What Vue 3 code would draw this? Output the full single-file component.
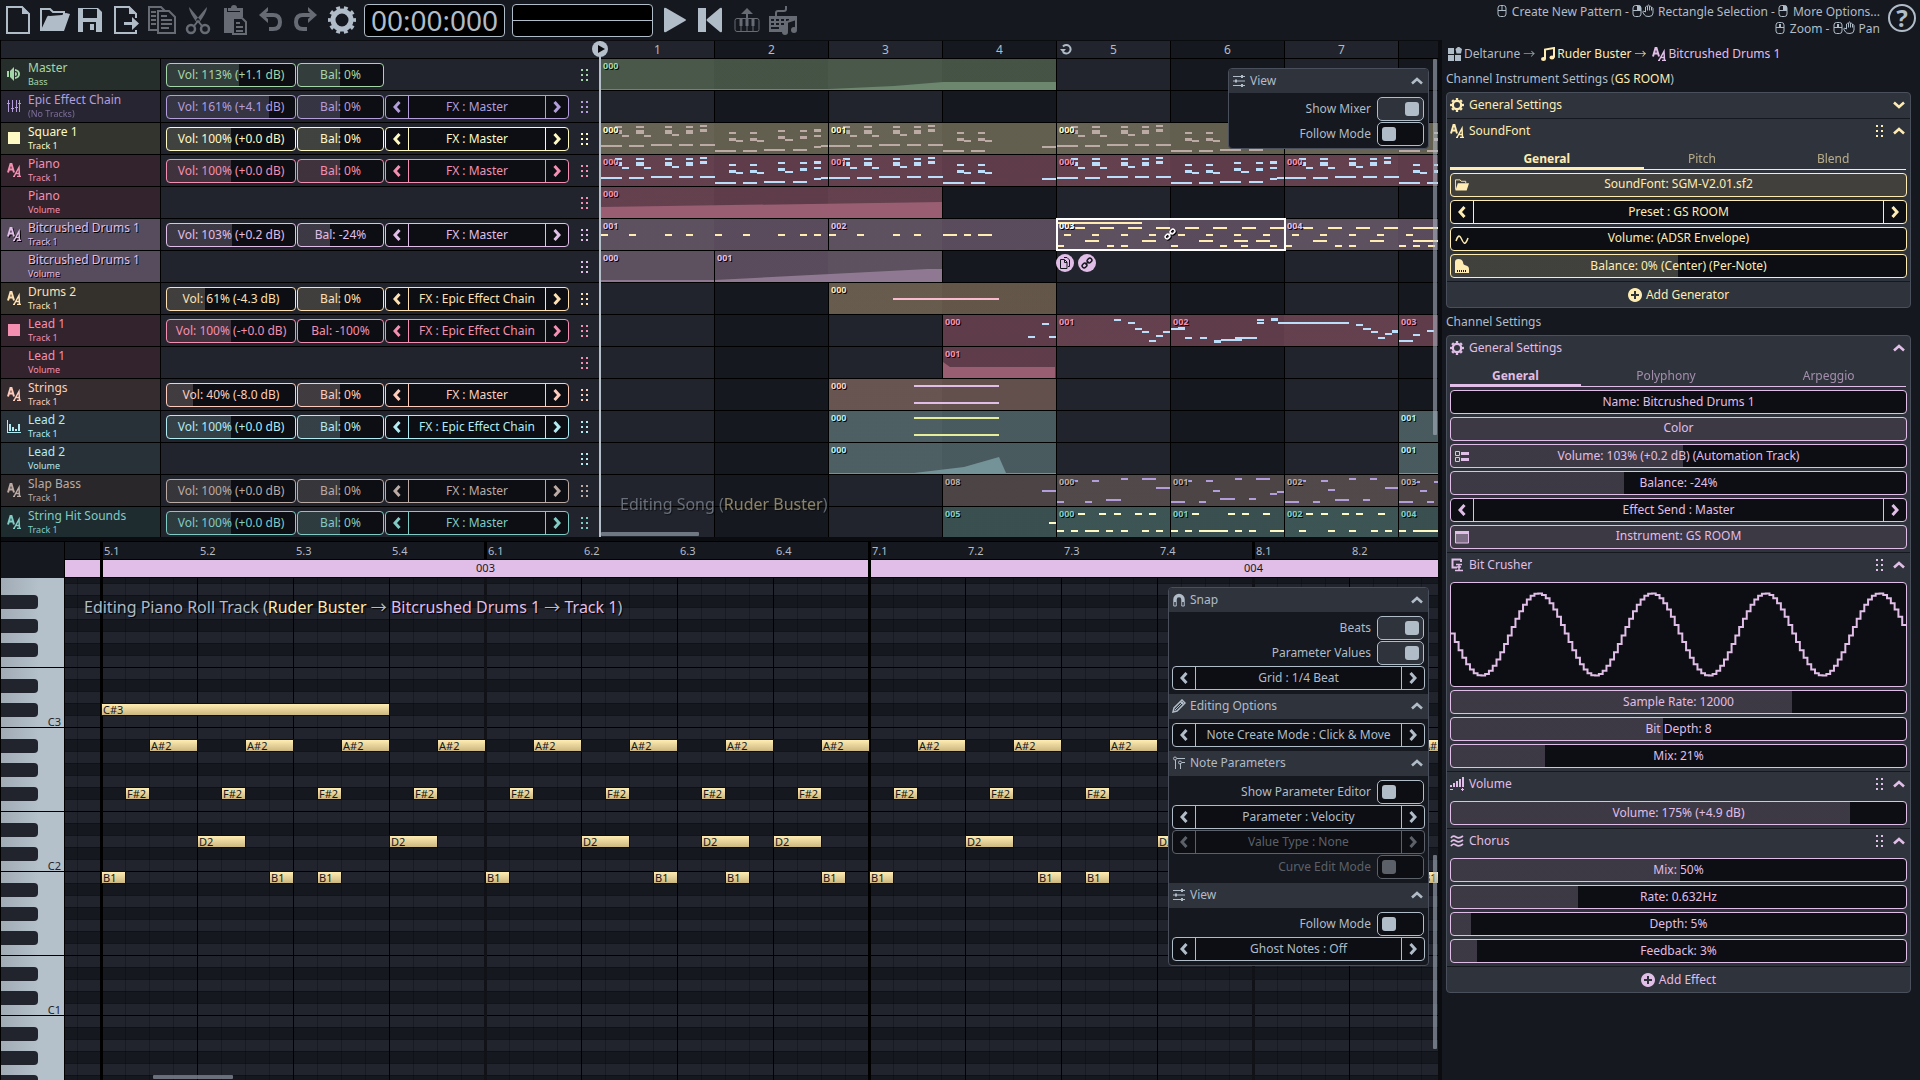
<script setup>
import { ref } from 'vue'

const AMBER = '#ffecb3'
const PINK = '#f48fb1'
const ORCHID = '#e1bee7'

const tools = [
  { id: 'new', label: 'New' },
  { id: 'open', label: 'Open' },
  { id: 'save', label: 'Save' },
  { id: 'export', label: 'Export' },
  { id: 'copy', label: 'Copy', dim: true },
  { id: 'cut', label: 'Cut', dim: true },
  { id: 'paste', label: 'Paste', dim: true },
  { id: 'undo', label: 'Undo', dim: true },
  { id: 'redo', label: 'Redo', dim: true },
  { id: 'gear', label: 'Settings' },
]
const transport = [
  { id: 'play', label: 'Play' },
  { id: 'rewind', label: 'Rewind' },
  { id: 'midi', label: 'MIDI input', dim: true },
  { id: 'keyboard', label: 'Typing keyboard', dim: true },
]

// Notes are [x, y, width, height] inside a pattern; width 7 is one sixteenth.
const n = (y, xs, w = 7, h = 2) => xs.map((x) => [x, y, w, h])
const riffBar = [
  ...n(3, [14, 64, 85]), ...n(3, [35], 8), ...n(7, [14, 64, 85], 7, 4), ...n(7, [35], 8, 4),
  ...n(2, [99]), ...n(6, [99], 7, 3), ...n(12, [21, 43]), ...n(11, [71]),
  ...n(22, [0], 21), ...n(22, [28], 15), ...n(21, [50], 21), ...n(21, [78], 14), ...n(21, [99], 15),
  ...n(27, [114], 21), ...n(27, [142], 14),
  ...n(9, [128, 149]), ...n(15, [128, 149], 7, 3), ...n(17, [135, 156]),
]
const riffA = [
  ...riffBar, ...n(26, [163], 21), ...n(26, [192], 14), ...n(23, [213]), ...n(22, [220]),
  ...n(7, [177, 199]), ...n(13, [177, 199], 7, 3), ...n(16, [184], 8), ...n(6, [213], 7, 3), ...n(12, [213]),
]
const riffB = [...riffBar, ...n(23, [213], 14)]
const riff = [
  { name: '000', at: 0, bars: 2, notes: riffA },
  { name: '001', at: 2, bars: 2, notes: riffB },
  { name: '000', at: 4, bars: 2, notes: riffA },
  { name: '000', at: 6, bars: 2, notes: riffA },
]

const rows = [
  { name: 'Master', sub: 'Bass', color: '#a5d6a7', icon: 'speaker', vol: 'Vol: 113% (+1.1 dB)', v: 56, bal: 'Bal: 0%', b: 50,
    patterns: [{ name: '000', at: 0, bars: 4, area: '0,30 228,30 293,27 342,23 455,23 455,31 0,31' }] },
  { name: 'Epic Effect Chain', sub: '(No Tracks)', faint: true, color: '#b39ddb', icon: 'mixer', vol: 'Vol: 161% (+4.1 dB)', v: 80, bal: 'Bal: 0%', b: 50, fx: 'Master', patterns: [] },
  { name: 'Square 1', sub: 'Track 1', color: '#fff9c4', icon: 'square', vol: 'Vol: 100% (+0.0 dB)', v: 50, bal: 'Bal: 0%', b: 50, fx: 'Master', note: '#bcaaa4', patterns: riff },
  { name: 'Piano', sub: 'Track 1', color: PINK, icon: 'font', vol: 'Vol: 100% (+0.0 dB)', v: 50, bal: 'Bal: 0%', b: 50, fx: 'Master', note: '#bbdefb', patterns: riff },
  { name: 'Piano', sub: 'Volume', color: PINK, patterns: [{ name: '000', at: 0, bars: 3, area: '0,20 341,15 341,31 0,31' }] },
  { name: 'Bitcrushed Drums 1', sub: 'Track 1', color: ORCHID, icon: 'font', active: true, vol: 'Vol: 103% (+0.2 dB)', v: 51, bal: 'Bal: -24%', b: 38, fx: 'Master', note: AMBER,
    patterns: [
      { name: '001', at: 0, bars: 2, notes: n(15, [0, 28, 64, 85, 114, 142, 177, 199, 213]) },
      { name: '002', at: 2, bars: 2, notes: [...n(15, [0, 28, 64, 85, 135]), ...n(15, [114, 149], 14)] },
      { name: '003', at: 4, bars: 2, selected: true, notes: [
        ...n(3, [0], 85), ...n(8, [14, 43, 71, 99, 128, 156, 185, 213], 14),
        ...n(15, [7, 35, 64, 92, 121, 149, 177, 206]), ...n(21, [28, 85, 142, 177, 199], 14),
        ...n(26, [0, 50, 64, 114, 163, 184, 213])] },
      { name: '004', at: 6, bars: 2, notes: [
        ...n(8, [14, 43, 71, 99], 14), ...n(8, [128], 28), ...n(15, [7, 35, 64, 92, 121]),
        ...n(21, [28, 85], 14), ...n(21, [128], 28), ...n(26, [0, 50, 64, 114, 128, 143])] },
    ] },
  { name: 'Bitcrushed Drums 1', sub: 'Volume', color: ORCHID, active: true,
    patterns: [
      { name: '000', at: 0, bars: 1, area: '0,29 113,29 113,31 0,31' },
      { name: '001', at: 1, bars: 2, area: '0,29 213,18 227,18 227,31 0,31' },
    ] },
  { name: 'Drums 2', sub: 'Track 1', color: '#ffe0b2', icon: 'font', vol: 'Vol: 61% (-4.3 dB)', v: 30, bal: 'Bal: 0%', b: 50, fx: 'Epic Effect Chain', note: '#f8bbd0',
    patterns: [{ name: '000', at: 2, bars: 2, notes: n(15, [64], 106) }] },
  { name: 'Lead 1', sub: 'Track 1', color: PINK, icon: 'square', vol: 'Vol: 100% (-+0.0 dB)', v: 50, bal: 'Bal: -100%', b: 0, fx: 'Epic Effect Chain', note: '#bbdefb',
    patterns: [
      { name: '000', at: 3, bars: 1, notes: [...n(21, [85, 106]), ...n(8, [99])] },
      { name: '001', at: 4, bars: 1, notes: [...n(4, [57]), ...n(7, [71]), ...n(13, [78]), ...n(16, [85, 106]), ...n(25, [92]), ...n(20, [99])] },
      { name: '002', at: 5, bars: 2, notes: [
        ...n(13, [0], 14), ...n(12, [7]), ...n(22, [14, 29, 207]), ...n(25, [43], 7, 3), ...n(24, [50], 21), ...n(22, [64], 22),
        ...n(4, [86]), ...n(7, [86]), ...n(3, [100], 7, 3), ...n(7, [107], 71), ...n(9, [185]), ...n(13, [192], 8),
        ...n(16, [200]), ...n(18, [214]), ...n(15, [221], 7, 3)] },
      { name: '003', at: 7, bars: 1, notes: [...n(25, [0], 14), ...n(19, [14]), ...n(15, [28])] },
    ] },
  { name: 'Lead 1', sub: 'Volume', color: PINK, patterns: [{ name: '001', at: 3, bars: 1, area: '0,15 7,20 112,20 112,31 0,31' }] },
  { name: 'Strings', sub: 'Track 1', color: '#ffccbc', icon: 'font', vol: 'Vol: 40% (-8.0 dB)', v: 20, bal: 'Bal: 0%', b: 50, fx: 'Master', note: ORCHID,
    patterns: [{ name: '000', at: 2, bars: 2, notes: [...n(6, [85], 85), ...n(23, [85], 85)] }] },
  { name: 'Lead 2', sub: 'Track 1', color: '#b2ebf2', icon: 'bars', vol: 'Vol: 100% (+0.0 dB)', v: 50, bal: 'Bal: 0%', b: 50, fx: 'Epic Effect Chain', note: '#e6ee9c',
    patterns: [{ name: '000', at: 2, bars: 2, notes: [...n(6, [85], 85), ...n(23, [85], 85)] }, { name: '001', at: 7, bars: 1 }] },
  { name: 'Lead 2', sub: 'Volume', color: '#b2ebf2',
    patterns: [
      { name: '000', at: 2, bars: 2, area: '0,30 85,30 135,24 170,14 177,30 227,30 227,31 0,31' },
      { name: '001', at: 7, bars: 1, area: '0,30 113,30 113,31 0,31' },
    ] },
  { name: 'Slap Bass', sub: 'Track 1', color: '#bcaaa4', icon: 'font', vol: 'Vol: 100% (+0.0 dB)', v: 50, bal: 'Bal: 0%', b: 50, fx: 'Master', note: '#b39ddb',
    patterns: [
      { name: '008', at: 3, bars: 1, notes: n(15, [99], 14) },
      { name: '000', at: 4, bars: 1, notes: [...n(5, [14, 35]), ...n(3, [64]), ...n(3, [85], 14), ...n(12, [99], 14), ...n(26, [0, 28]), ...n(24, [49], 15)] },
      { name: '001', at: 5, bars: 1, notes: [...n(5, [14, 35]), ...n(3, [64]), ...n(3, [85], 14), ...n(15, [42]), ...n(23, [49], 15), ...n(23, [78]), ...n(18, [99]), ...n(16, [106]), ...n(26, [0], 14), ...n(26, [28])] },
      { name: '002', at: 6, bars: 1, notes: [...n(5, [14, 36]), ...n(3, [64, 85]), ...n(14, [43]), ...n(24, [50], 14), ...n(24, [78]), ...n(12, [100], 13), ...n(26, [0], 14), ...n(26, [28])] },
      { name: '003', at: 7, bars: 1, notes: [...n(6, [14, 35]), ...n(15, [21]), ...n(26, [0], 14), ...n(26, [28])] },
    ] },
  { name: 'String Hit Sounds', sub: 'Track 1', color: '#80cbc4', icon: 'font', vol: 'Vol: 100% (+0.0 dB)', v: 50, bal: 'Bal: 0%', b: 50, fx: 'Master', note: '#fff9c4',
    patterns: [
      { name: '005', at: 3, bars: 1, notes: n(15, [106]) },
      { name: '000', at: 4, bars: 1, notes: [...n(6, [21, 42, 57, 78, 92]), ...n(23, [0, 14, 49, 64, 85, 99]), ...n(23, [28], 14)] },
      { name: '001', at: 5, bars: 1, notes: [...n(6, [21, 57, 71, 92]), ...n(23, [0, 14, 64, 78]), ...n(23, [28], 29), ...n(23, [99], 14)] },
      { name: '002', at: 6, bars: 1, notes: [...n(6, [21, 36, 57, 71, 93]), ...n(23, [14, 43, 64, 86, 100])] },
      { name: '004', at: 7, bars: 1, notes: [...n(23, [0]), ...n(23, [14], 28)] },
    ] },
]

// The selected pattern's frame covers the grid lines around it.
const box = (p) => ({
  left: p.at * 114 + 1 + 'px',
  width: p.bars * 114 + (p.selected ? 2 : -1) + 'px',
})

// Piano roll: 96 px per beat, 24 px per sixteenth.
const STEP = 24
const ORIGIN = 36
const pitches = { 'C#3': 125, 'A#2': 161, 'F#2': 209, D2: 257, B1: 293 }
const roll = [
  ['C#3', 0, 12],
  ...[2, 6, 10, 14, 18, 22, 26, 30, 34, 38, 42].map((s) => ['A#2', s, 2]),
  ['A#2', 55, 2],
  ...[1, 5, 9, 13, 17, 21, 25, 29, 33, 37, 41].map((s) => ['F#2', s, 1]),
  ...[4, 12, 20, 25, 28, 36, 44].map((s) => ['D2', s, 2]),
  ...[0, 7, 9, 16, 23, 26, 30, 32, 39, 41, 55].map((s) => ['B1', s, 1]),
].map(([key, s, len]) => ({ key, top: pitches[key], left: ORIGIN + s * STEP, width: len * STEP + 1 }))

const scale = ['B', 'A#', 'A', 'G#', 'G', 'F#', 'F', 'E', 'D#', 'D', 'C#', 'C']
const lanes = Array.from({ length: 42 }, (_, i) => ({ note: scale[i % 12], octave: 3 - Math.floor(i / 12) }))
const beats = Array.from({ length: 14 }, (_, i) => `${5 + Math.floor(i / 4)}.${(i % 4) + 1}`)

const mixerOn = ref(true)
const songFollow = ref(false)
const rollGroups = [
  { title: 'Snap', icon: 'magnet', items: [
    { kind: 'toggle', text: 'Beats', on: true },
    { kind: 'toggle', text: 'Parameter Values', on: true },
    { kind: 'pick', text: 'Grid : 1/4 Beat' }] },
  { title: 'Editing Options', icon: 'pencil', items: [{ kind: 'pick', text: 'Note Create Mode : Click & Move' }] },
  { title: 'Note Parameters', icon: 'params', items: [
    { kind: 'toggle', text: 'Show Parameter Editor', on: false },
    { kind: 'pick', text: 'Parameter : Velocity' },
    { kind: 'pick', text: 'Value Type : None', off: true },
    { kind: 'toggle', text: 'Curve Edit Mode', on: false, off: true }] },
  { title: 'View', icon: 'view', items: [
    { kind: 'toggle', text: 'Follow Mode', on: false },
    { kind: 'pick', text: 'Ghost Notes : Off' }] },
]

const panels = [
  { title: 'Channel Instrument Settings (', em: 'GS ROOM', end: ')', color: AMBER, add: 'Add Generator', sections: [
    { title: 'General Settings', icon: 'cog', closed: true },
    { title: 'SoundFont', icon: 'font', grip: true, tabs: [['General', 194], ['Pitch', 117], ['Blend', 146]], items: [
      { kind: 'button', text: 'SoundFont: SGM-V2.01.sf2', icon: 'folder' },
      { kind: 'pick', text: 'Preset : GS ROOM' },
      { kind: 'plain', text: 'Volume: (ADSR Envelope)', icon: 'sine' },
      { kind: 'slider', text: 'Balance: 0% (Center) (Per-Note)', v: 50, icon: 'grand' }] },
  ] },
  { title: 'Channel Settings', em: '', end: '', color: ORCHID, add: 'Add Effect', sections: [
    { title: 'General Settings', icon: 'cog', tabs: [['General', 131], ['Polyphony', 171], ['Arpeggio', 155]], items: [
      { kind: 'text', text: 'Name: Bitcrushed Drums 1' },
      { kind: 'button', text: 'Color' },
      { kind: 'slider', text: 'Volume: 103% (+0.2 dB) (Automation Track)', v: 51, icon: 'track' },
      { kind: 'slider', text: 'Balance: -24%', v: 38 },
      { kind: 'pick', text: 'Effect Send : Master' },
      { kind: 'button', text: 'Instrument: GS ROOM', icon: 'window' }] },
    { title: 'Bit Crusher', icon: 'clamp', grip: true, items: [
      { kind: 'wave', text: 'wave' },
      { kind: 'slider', text: 'Sample Rate: 12000', v: 75 },
      { kind: 'slider', text: 'Bit Depth: 8', v: 46.6 },
      { kind: 'slider', text: 'Mix: 21%', v: 20.7 }] },
    { title: 'Volume', icon: 'level', grip: true, items: [{ kind: 'slider', text: 'Volume: 175% (+4.9 dB)', v: 87.7 }] },
    { title: 'Chorus', icon: 'chorus', grip: true, items: [
      { kind: 'slider', text: 'Mix: 50%', v: 50.3 },
      { kind: 'slider', text: 'Rate: 0.632Hz', v: 28 },
      { kind: 'slider', text: 'Depth: 5%', v: 4.5 },
      { kind: 'slider', text: 'Feedback: 3%', v: 5.8 }] },
  ] },
]

// Sample-and-hold sine drawn as a staircase.
const hold = 3.8
let wavePath = ''
for (let i = 0; i * hold < 456; i++) {
  const y = (52 - 41.5 * Math.cos((2 * Math.PI * (i * hold + 2 - 88)) / 114)).toFixed(1)
  wavePath += (i ? `V${y}` : `M0 ${y}`) + `H${((i + 1) * hold).toFixed(1)}`
}
</script>

<template>
  <svg class="sprites" aria-hidden="true">
    <symbol id="i-new" viewBox="0 0 36 40"><path d="M7 7h15l7 7v19H7z" fill="none" stroke="currentColor" stroke-width="2" /><path d="M22 6v8h8z" fill="currentColor" /></symbol>
    <symbol id="i-open" viewBox="0 0 36 40"><path d="M5 31V9h9l3 3h11v5" fill="none" stroke="currentColor" stroke-width="2" /><path d="M11 17q1-2 3-1l12-1q2-2 4-2l4 1-6 17H4.500z" fill="currentColor" /></symbol>
    <symbol id="i-save" viewBox="0 0 36 40"><path fill-rule="evenodd" d="M6 8h20l4 4v20H6zM11 9v9h14V9zm0 13v10h13V22zm7 2h4v6h-4z" fill="currentColor" /></symbol>
    <symbol id="i-export" viewBox="0 0 36 40"><path d="M28 18v-4l-7-7H7v26h21v-3" fill="none" stroke="currentColor" stroke-width="2" /><path d="M21 6v8h8zM16 22h8v-5l7 6.500-7 6.500v-5h-8z" fill="currentColor" /></symbol>
    <symbol id="i-copy" viewBox="0 0 36 40"><path d="M13 30H5V7h12l4 4" fill="none" stroke="currentColor" stroke-width="2" /><path d="M14 11h11l6 6v16H14z" fill="#15181f" stroke="currentColor" stroke-width="2" /><path d="M7 12h5M7 16h5M7 20h5M7 24h5M17 16h6M17 20h11M17 24h11M17 28h8" stroke="currentColor" stroke-width="2" /></symbol>
    <symbol id="i-cut" viewBox="0 0 36 40"><path d="M9 7q0 5 8 16l3-3Q11 9 9 7zM27 7q0 5-8 16l-3-3Q25 9 27 7z" fill="currentColor" /><circle cx="11" cy="29" r="4" fill="none" stroke="currentColor" stroke-width="2.500" /><circle cx="25" cy="29" r="4" fill="none" stroke="currentColor" stroke-width="2.500" /><path d="M14 26l4-5 4 5" fill="none" stroke="currentColor" stroke-width="2" /></symbol>
    <symbol id="i-paste" viewBox="0 0 36 40"><path d="M8 8h3v4h13V8h3v9h-9v16H8z" fill="currentColor" /><path d="M12 8h3a3 3 0 0 1 6 0h3v3H12z" fill="currentColor" /><path d="M17 18h9l4 4v12H17z" fill="#15181f" stroke="currentColor" stroke-width="2" /><path d="M20 23h4M20 27h7M20 31h7" stroke="currentColor" stroke-width="2" /></symbol>
    <symbol id="i-undo" viewBox="0 0 36 40"><path d="M10 15h11q7 0 7 7t-7 7h-4" fill="none" stroke="currentColor" stroke-width="4" /><path d="M16 7v4l-4 4 4 4v4l-9-8z" fill="currentColor" /></symbol>
    <symbol id="i-redo" viewBox="0 0 36 40"><path d="M26 15H15q-7 0-7 7t7 7h4" fill="none" stroke="currentColor" stroke-width="4" /><path d="M20 7v4l4 4-4 4v4l9-8z" fill="currentColor" /></symbol>
    <symbol id="i-gear" viewBox="0 0 36 40"><g fill="none" stroke="currentColor"><circle cx="18" cy="20" r="9" stroke-width="5" /><circle cx="18" cy="20" r="12" stroke-width="4" pathLength="100" stroke-dasharray="5 5" stroke-dashoffset="2.500" /></g></symbol>
    <symbol id="i-play" viewBox="0 0 36 40"><path d="M7 9q0-2 2-1l19 11q2 1 0 2L9 32q-2 1-2-1z" fill="currentColor" /></symbol>
    <symbol id="i-rewind" viewBox="0 0 36 40"><path d="M5 8h8v24H5zM29 9v22q0 2-2 1L14 21q-1-1 0-2L27 8q2-1 2 1z" fill="currentColor" /></symbol>
    <symbol id="i-midi" viewBox="0 0 36 40"><path d="M17 18v-4h-5l6-6 6 6h-5v4z" fill="currentColor" /><rect x="6" y="18.500" width="24" height="13" rx="2" fill="none" stroke="currentColor" stroke-width="1" /><path d="M12 19v7M18 19v7M24 19v7" stroke="currentColor" stroke-width="3" /><path d="M12 26v5M18 26v5M24 26v5" stroke="currentColor" stroke-width="1" /></symbol>
    <symbol id="i-keyboard" viewBox="0 0 36 40"><path d="M11 16v-3q0-2 2-2h6q2 0 2-2V6" fill="none" stroke="currentColor" stroke-width="2" /><path fill-rule="evenodd" d="M4 16h28v3l-9 3v6l-6 4H4zM6 19v2h3v-2zm5 0v2h3v-2zm5 0v2h3v-2zm5 0v2h3v-2zM6 23v2h3v-2zm5 0v2h3v-2zm5 0v2h3v-2zM6 27v2h8v-2z" fill="currentColor" /><path d="M22 31v-9l9-3v10" fill="none" stroke="currentColor" stroke-width="2" /><circle cx="20" cy="32" r="3" fill="currentColor" /><circle cx="29" cy="30" r="3" fill="currentColor" /></symbol>
    <symbol id="i-speaker" viewBox="0 0 14 14"><path d="M0 4h2v6H0zM3 4l4-4v14l-4-4zM8 2q5 1 5 5t-5 5v-2q3 0 3-3T8 4zM8 5q2 0 2 2T8 9z" fill="currentColor" /></symbol>
    <symbol id="i-mixer" viewBox="0 0 14 14"><path d="M1.500 1v12M5.500 1v12M9.500 1v12M12.500 1v12M0 4.500h3M4 9.500h3M8 8.500h3M11 4.500h3" stroke="currentColor" fill="none" /></symbol>
    <symbol id="i-square" viewBox="0 0 14 14"><path d="M1 1h12v12H1z" fill="currentColor" /></symbol>
    <symbol id="i-bars" viewBox="0 0 14 14"><path d="M0 1h1v12h13v1H0zM2 5h2v7H2zM5 8h2v4H5zM8 10h2v2H8zM11 5h2v7h-2z" fill="currentColor" /></symbol>
    <symbol id="i-font" viewBox="0 0 14 14"><g fill="none" stroke="currentColor"><path d="M1 9.500L3.500 1h1L7 9.500M2 6.500h4" stroke-width="2" /><path d="M6 13.500h2M10 13.500h4M7 13.500L12 4.500l.5 9M8.500 10.500h4" stroke-width="1.500" /></g></symbol>
    <symbol id="i-view" viewBox="0 0 14 14"><path d="M1 2.500h12M1 7h12M1 11.500h12" stroke="currentColor" /><path d="M9 1h2v3H9zM3 5.500h2v3H3zM9 10h2v3H9z" fill="currentColor" /></symbol>
    <symbol id="i-magnet" viewBox="0 0 14 14"><path d="M3 9V6.500a4 4 0 0 1 8 0V9" fill="none" stroke="currentColor" stroke-width="3.500" /><path d="M1.750 9v4h2.500V9M9.750 9v4h2.500V9" fill="none" stroke="currentColor" /></symbol>
    <symbol id="i-pencil" viewBox="0 0 14 14"><path d="M1 13l1-4 8-8 3 3-8 8zM8.500 2.500l3 3" fill="none" stroke="currentColor" stroke-width="1.500" /><path d="M3 11L11 3" stroke="currentColor" /></symbol>
    <symbol id="i-params" viewBox="0 0 14 14"><path d="M3.500 4v9M8.500 7v6M5 2.500h8M10 6.500h3" stroke="currentColor" /><circle cx="3" cy="2.500" r="1.500" fill="none" stroke="currentColor" /><circle cx="8" cy="6.500" r="1.500" fill="none" stroke="currentColor" /></symbol>
    <symbol id="i-cog" viewBox="0 0 14 14"><g fill="none" stroke="currentColor"><circle cx="7" cy="7" r="4.200" stroke-width="2.400" /><circle cx="7" cy="7" r="6" stroke-width="2" pathLength="80" stroke-dasharray="5 5" stroke-dashoffset="2.500" /></g></symbol>
    <symbol id="i-folder" viewBox="0 0 15 14"><path d="M.5 12V1.500h5l1 1.500h5v2" fill="none" stroke="currentColor" /><path d="M3 5h12l-2.500 8H.5z" fill="currentColor" /></symbol>
    <symbol id="i-sine" viewBox="0 0 14 14"><path d="M1 9q2.500-8 5-3t3 5q2 1 4-5" fill="none" stroke="currentColor" stroke-width="1.500" /></symbol>
    <symbol id="i-grand" viewBox="0 0 14 14"><path d="M0 10V3q0-3 3.500-3T8 3q0 3 3 3.500T14 10v4H0z" fill="currentColor" /><path d="M2.500 11v2M4.500 11v2M6.500 11v2M8.500 11v2M10.500 11v2" stroke="#15181f" /></symbol>
    <symbol id="i-track" viewBox="0 0 14 14"><path d="M.5 2.500h4v4h-4zM.5 8.500h4v4h-4z" fill="none" stroke="currentColor" /><path d="M6 3h8v3H6zM6 9h8v3H6z" fill="currentColor" /></symbol>
    <symbol id="i-window" viewBox="0 0 14 14"><path d="M.5 3h13v10H.5z" fill="currentColor" fill-opacity=".4" stroke="currentColor" /><path d="M0 1h14v3H0z" fill="currentColor" /></symbol>
    <symbol id="i-clamp" viewBox="0 0 14 14"><path d="M11 1.500H2.500v8H7M11 1v3" fill="none" stroke="currentColor" stroke-width="2" /><path d="M6 6.500h6M9 7v5M7 9h4M5 12.500h8" stroke="currentColor" stroke-width="1.500" /></symbol>
    <symbol id="i-level" viewBox="0 0 14 14"><path d="M0 8h2v2H0zM3 6h2v4H3zM6 4h2v6H6zM9 2h2v8H9zM12 0h2v10h-2zM0 12h3v1H0zM11 12h3v1h-3zM12 11h1v3h-1z" fill="currentColor" /></symbol>
    <symbol id="i-chorus" viewBox="0 0 14 14"><path d="M1 4q2-3 5-1t7-1M1 8q2-3 5-1t7-1M1 12q2-3 5-1t7-1" fill="none" stroke="currentColor" stroke-width="1.700" /></symbol>
    <symbol id="i-add" viewBox="0 0 14 14"><path fill-rule="evenodd" d="M7 0a7 7 0 1 0 .01 0zM6 3h2v3h3v2H8v3H6V8H3V6h3z" fill="currentColor" /></symbol>
    <symbol id="i-grip" viewBox="0 0 8 12"><path d="M0 0h2v2H0zM5 0h2v2H5zM0 5h2v2H0zM5 5h2v2H5zM0 10h2v2H0zM5 10h2v2H5z" fill="currentColor" /></symbol>
    <symbol id="i-left" viewBox="0 0 8 12"><path d="M6.500 1L2 6l4.500 5" fill="none" stroke="currentColor" stroke-width="3" /></symbol>
    <symbol id="i-right" viewBox="0 0 8 12"><path d="M1.500 1L6 6l-4.500 5" fill="none" stroke="currentColor" stroke-width="3" /></symbol>
    <symbol id="i-up" viewBox="0 0 12 8"><path d="M1 6.500L6 2l5 4.500" fill="none" stroke="currentColor" stroke-width="2.600" /></symbol>
    <symbol id="i-down" viewBox="0 0 12 8"><path d="M1 1.500L6 6l5-4.500" fill="none" stroke="currentColor" stroke-width="2.600" /></symbol>
    <symbol id="i-mouse" viewBox="0 0 10 14"><rect x="1" y="1.500" width="8" height="11" rx="2.500" fill="none" stroke="currentColor" /><path d="M1 6.500h8M5 2v4.500" stroke="currentColor" /></symbol>
    <symbol id="i-mouse-r" viewBox="0 0 10 14"><rect x="1" y="1.500" width="8" height="11" rx="2.500" fill="none" stroke="currentColor" /><path d="M1 6.500h8" stroke="currentColor" /><path d="M5 1.500h3L9 3v3.500H5z" fill="currentColor" /></symbol>
    <symbol id="i-mouse-m" viewBox="0 0 10 14"><rect x="1" y="1.500" width="8" height="11" rx="2.500" fill="none" stroke="currentColor" /><path d="M1 6.500h8" stroke="currentColor" /><path d="M4 3h2v4H4z" fill="currentColor" /></symbol>
    <symbol id="i-hand" viewBox="0 0 12 14"><path d="M3.500 8V3q1-1.500 2 0 0-2 1-2t1 2q1-1.500 2 0v1q1-1 1.500.5V9q0 3.500-4 3.500T2.500 11L.7 8Q1 6 3.500 8M5.500 3v3.500M7.500 3v3.500M9.500 4v2.500" fill="none" stroke="currentColor" /></symbol>
    <symbol id="i-blocks" viewBox="0 0 14 14"><path d="M0 1h6v6H0zM0 8h6v6H0zM7 8h6v6H7zM10.500-.5L14 2l-1 4.500H8.500L7.500 2z" fill="currentColor" /></symbol>
    <symbol id="i-music" viewBox="0 0 14 14"><path d="M4 12V2.500L13 1v9.500" fill="none" stroke="currentColor" stroke-width="2" /><ellipse cx="2.500" cy="12" rx="2.500" ry="2" fill="currentColor" /><ellipse cx="11" cy="10.500" rx="2.500" ry="2" fill="currentColor" /></symbol>
    <symbol id="i-link" viewBox="0 0 12 12"><g fill="none" stroke="currentColor" stroke-width="1.500"><rect x="1" y="6.500" width="5" height="4" rx="2" transform="rotate(-45 3.500 8.500)" /><rect x="6" y="1.500" width="5" height="4" rx="2" transform="rotate(-45 8.500 3.500)" /><path d="M4.500 7.500l3-3" /></g></symbol>
    <symbol id="i-pages" viewBox="0 0 12 12"><path d="M1.500 2.500h4L8 5v6.500H1.500zM5 .5h3L10.500 3v6.500H9M5.500 3v2.500H8" fill="none" stroke="currentColor" /></symbol>
    <symbol id="i-loop" viewBox="0 0 12 12"><path d="M3 3.500A4.300 4.300 0 1 1 3 9" fill="none" stroke="currentColor" stroke-width="2" /><path d="M0 6h6L3 9.500z" fill="currentColor" /></symbol>
  </svg>

  <div class="app">
    <header class="toolbar">
      <button v-for="t in tools" :key="t.id" class="tool" :class="{ dim: t.dim }" :aria-label="t.label"><svg><use :href="'#i-' + t.id" /></svg></button>
      <output class="clock">00:00:000</output>
      <div class="scope"></div>
      <button v-for="t in transport" :key="t.id" class="tool" :class="{ dim: t.dim }" :aria-label="t.label"><svg><use :href="'#i-' + t.id" /></svg></button>
      <div class="hints">
        <p><svg class="m"><use href="#i-mouse" /></svg>Create New Pattern - <svg class="m tight"><use href="#i-mouse-r" /></svg><svg class="hand"><use href="#i-hand" /></svg>Rectangle Selection - <svg class="m"><use href="#i-mouse-r" /></svg>More Options...</p>
        <p><svg class="m"><use href="#i-mouse-m" /></svg>Zoom - <svg class="m tight"><use href="#i-mouse-m" /></svg><svg class="hand"><use href="#i-hand" /></svg>Pan</p>
      </div>
      <button class="help">?</button>
    </header>

    <div class="work">
      <main class="editors">
        <section class="song">
          <div class="ruler">
            <div class="ruler-pad"></div>
            <div class="bars"><span v-for="b in 8" :key="b">{{ b === 8 ? '' : b }}</span></div>
          </div>
          <div v-for="(row, i) in rows" :key="i" class="row" :class="{ active: row.active }" :style="{ '--c': row.color }">
            <div class="chan">
              <span class="chan-icon"><svg v-if="row.icon"><use :href="'#i-' + row.icon" /></svg></span>
              <span class="chan-text"><b>{{ row.name }}</b><small :class="{ faint: row.faint }">{{ row.sub }}</small></span>
            </div>
            <div class="mix">
              <template v-if="row.vol">
                <label class="ctl slider vol" :style="{ '--v': row.v + '%' }"><span>{{ row.vol }}</span><input type="range" :value="row.v" /></label>
                <label class="ctl slider bal" :style="{ '--v': row.b + '%' }"><span>{{ row.bal }}</span><input type="range" :value="row.b" /></label>
                <div v-if="row.fx" class="ctl pick fx">
                  <button aria-label="Previous"><svg><use href="#i-left" /></svg></button>
                  <select :aria-label="row.name + ' effect send'"><option>FX : {{ row.fx }}</option></select>
                  <button aria-label="Next"><svg><use href="#i-right" /></svg></button>
                </div>
              </template>
              <svg class="grip"><use href="#i-grip" /></svg>
            </div>
            <div class="lane">
              <div v-for="p in row.patterns" :key="p.at" class="pattern" :class="{ selected: p.selected, even: p.at % 2 }" :style="box(p)">
                <svg class="art" aria-hidden="true">
                  <polygon v-if="p.area" class="area" :points="p.area" />
                  <rect v-for="(r, k) in p.notes" :key="k" :x="r[0]" :y="r[1]" :width="r[2]" :height="r[3]" :fill="row.note" />
                </svg>
                <span class="pname">{{ p.name }}</span>
                <svg v-if="p.selected" class="link"><use href="#i-link" /></svg>
              </div>
            </div>
          </div>
          <div class="playhead"><span></span></div>
          <svg class="loop"><use href="#i-loop" /></svg>
          <div class="badges"><i><svg><use href="#i-pages" /></svg></i><i><svg><use href="#i-link" /></svg></i></div>
          <h2 class="title song-title">Editing Song (<em class="amber">Ruder Buster</em>)</h2>
          <span class="bar-v song-v"></span><span class="bar-h song-h"></span>
          <div class="float song-float">
            <div class="fhead"><svg><use href="#i-view" /></svg><span>View</span><svg class="chev"><use href="#i-up" /></svg></div>
            <div class="fbody">
              <label class="toggle"><span>Show Mixer</span><input v-model="mixerOn" type="checkbox" /></label>
              <label class="toggle"><span>Follow Mode</span><input v-model="songFollow" type="checkbox" /></label>
            </div>
          </div>
        </section>

        <section class="roll">
          <div class="rhead">
            <div class="corner"></div>
            <div class="rtop">
              <div class="beats"><span v-for="b in beats" :key="b" :class="{ bar: b.endsWith('.1') }">{{ b }}</span></div>
              <div class="strip"><span class="lead"></span><span>003</span><span>004</span></div>
            </div>
          </div>
          <div class="rbody">
            <div class="keys">
              <div v-for="(l, i) in lanes" :key="i" class="key" :class="{ black: l.note.length > 1, edge: i && (l.note === 'B' || l.note === 'E') }"><span v-if="l.note === 'C'">C{{ l.octave }}</span></div>
            </div>
            <div class="grid">
              <div v-for="(l, i) in lanes" :key="i" class="glane" :class="{ black: l.note.length > 1, edge: i && (l.note === 'B' || l.note === 'E') }"></div>
              <div class="lines"></div>
              <div class="barlines"></div>
              <div v-for="(k, i) in roll" :key="i" class="note" :style="{ left: k.left + 'px', top: k.top + 'px', width: k.width + 'px' }">{{ k.key }}</div>
              <h2 class="title roll-title">Editing Piano Roll Track (<em class="amber">Ruder Buster</em> <span class="arrow">→</span> <em class="orchid">Bitcrushed Drums 1</em> <span class="arrow">→</span> <em class="orchid">Track 1</em>)</h2>
              <span class="bar-v roll-v"></span><span class="bar-h roll-h"></span>
            </div>
          </div>
          <div class="float roll-float">
            <template v-for="g in rollGroups" :key="g.title">
              <div class="fhead"><svg><use :href="'#i-' + g.icon" /></svg><span>{{ g.title }}</span><svg class="chev"><use href="#i-up" /></svg></div>
              <div class="fbody">
                <template v-for="it in g.items" :key="it.text">
                  <label v-if="it.kind === 'toggle'" class="toggle" :class="{ off: it.off }"><span>{{ it.text }}</span><input type="checkbox" :checked="it.on" :disabled="it.off" /></label>
                  <div v-else class="ctl pick" :class="{ off: it.off }">
                    <button aria-label="Previous"><svg><use href="#i-left" /></svg></button>
                    <select :aria-label="it.text"><option>{{ it.text }}</option></select>
                    <button aria-label="Next"><svg><use href="#i-right" /></svg></button>
                  </div>
                </template>
              </div>
            </template>
          </div>
        </section>
      </main>

      <aside class="side">
        <nav class="crumbs">
          <svg><use href="#i-blocks" /></svg><a href="#deltarune">Deltarune</a><span class="arrow">→</span>
          <span class="amber"><svg><use href="#i-music" /></svg></span><a href="#song" class="amber">Ruder Buster</a><span class="arrow amber">→</span>
          <span class="orchid"><svg><use href="#i-font" /></svg></span><a href="#channel" class="orchid">Bitcrushed Drums 1</a>
        </nav>
        <template v-for="p in panels" :key="p.add">
          <h3 class="ptitle">{{ p.title }}<em class="amber">{{ p.em }}</em>{{ p.end }}</h3>
          <div class="panel" :style="{ '--c': p.color }">
            <section v-for="s in p.sections" :key="s.title" :class="{ closed: s.closed }">
              <div class="shead" :class="{ pad: !s.tabs && !s.closed }">
                <svg class="ic"><use :href="'#i-' + s.icon" /></svg><span>{{ s.title }}</span>
                <svg v-if="s.grip" class="grip"><use href="#i-grip" /></svg>
                <svg class="chev"><use :href="s.closed ? '#i-down' : '#i-up'" /></svg>
              </div>
              <div v-if="s.tabs" class="tabs" role="tablist">
                <button v-for="(t, i) in s.tabs" :key="t[0]" role="tab" :class="{ on: i === 0 }" :style="{ flexGrow: t[1] }">{{ t[0] }}</button>
              </div>
              <div v-if="s.items" class="items">
                <template v-for="it in s.items" :key="it.text">
                  <label v-if="it.kind === 'slider'" class="ctl slider" :style="{ '--v': it.v + '%' }"><svg v-if="it.icon" class="lead-ic"><use :href="'#i-' + it.icon" /></svg><span>{{ it.text }}</span><input type="range" :value="it.v" /></label>
                  <div v-else-if="it.kind === 'pick'" class="ctl pick">
                    <button aria-label="Previous"><svg><use href="#i-left" /></svg></button>
                    <select :aria-label="it.text"><option>{{ it.text }}</option></select>
                    <button aria-label="Next"><svg><use href="#i-right" /></svg></button>
                  </div>
                  <input v-else-if="it.kind === 'text'" class="ctl box" type="text" aria-label="Name" :value="it.text" />
                  <div v-else-if="it.kind === 'wave'" class="ctl wave"><svg viewBox="0 0 456 104" preserveAspectRatio="none"><path :d="wavePath" /></svg></div>
                  <button v-else class="ctl box" :class="{ solid: it.kind === 'button' }"><svg v-if="it.icon" class="lead-ic"><use :href="'#i-' + it.icon" /></svg>{{ it.text }}</button>
                </template>
              </div>
            </section>
            <button class="add"><svg class="ic"><use href="#i-add" /></svg>{{ p.add }}</button>
          </div>
        </template>
      </aside>
    </div>
  </div>
</template>

<style>
html, body { margin: 0; background: #0b0c10; }
</style>

<style scoped>
* { box-sizing: border-box; }
.sprites { position: absolute; width: 0; height: 0; }
.app {
  --c: #b0bcc8;
  --dark: #15181f;
  --cell: #21242d;
  --well: #0c0e13;
  display: flex; flex-direction: column; height: 100vh; overflow: hidden;
  background: #0b0c10; color: var(--c);
  font: 12px/16px "Noto Sans", sans-serif;
}
button, input, select { font: inherit; color: inherit; margin: 0; padding: 0; border: 0; background: none; border-radius: 0; outline: 0; }
h2, h3, p { margin: 0; font-weight: 400; }
em { font-style: normal; }
a { color: inherit; text-decoration: none; }
svg { display: block; flex: none; width: 14px; height: 14px; overflow: visible; }
.amber { color: #ffecb3; }
.orchid { color: #e1bee7; }
.arrow { font-family: "Noto Sans CJK JP", sans-serif; line-height: 1; }

.toolbar { display: flex; align-items: center; height: 40px; flex: none; background: var(--dark); }
.tool { width: 36px; height: 40px; }
.tool svg { width: 36px; height: 40px; }
.dim { color: #666b74; }
.clock, .scope { width: 141px; height: 33px; margin: 1px 3px 0 4px; border: 1px solid var(--c); border-radius: 4px; background: #000; }
.clock { font-size: 28px; line-height: 30px; text-align: center; }
.scope { margin-right: 4px; background: linear-gradient(#000 15px, var(--c) 15px 16px, #000 16px); }
.hints { margin-left: auto; margin-bottom: 1px; line-height: 17px; }
.hints p { display: flex; justify-content: flex-end; align-items: center; white-space: pre; }
.hints .m { width: 10px; margin-right: 5px; }
.hints .tight { margin-right: 0; }
.hints .hand { width: 12px; margin-right: 4px; }
.help { width: 28px; height: 28px; margin: 0 4px 4px 8px; border: 2px solid var(--c); border-radius: 50%; font-size: 24px; font-weight: 700; line-height: 24px; }

.work { display: flex; flex: 1; min-height: 0; }
.editors { flex: 1; min-width: 0; display: flex; flex-direction: column; border-left: 1px solid #000; }

.song { position: relative; overflow: hidden; flex: none; }
.ruler { display: flex; height: 18px; background: var(--cell); border-top: 1px solid #0b0c10; }
.ruler-pad { flex: none; width: 599px; }
.bars { flex: 1; min-width: 0; display: flex; overflow: hidden; }
.bars span { flex: none; width: 114px; line-height: 17px; text-align: center; border-left: 1px solid #000; }
.bars span:first-child { border-color: var(--cell); }
.bars span:nth-child(even) { background: var(--dark); }
.row { display: flex; height: 32px; border-top: 1px solid #000; color: var(--c); }
.row:nth-child(16) { height: 31px; }
.chan { flex: none; display: flex; width: 160px; background: color-mix(in srgb, var(--c) 16%, #0d0e13); border-right: 1px solid #000; }
.chan-icon { width: 27px; padding: 8px 6px; flex: none; }
.chan-text { display: flex; flex-direction: column; white-space: nowrap; }
.chan-text b { font-weight: 400; line-height: 17px; }
.chan-text small { font-size: 9px; line-height: 12px; }
.faint { opacity: .6; }
.active .chan { background: color-mix(in srgb, var(--c) 35%, #0d0e13); text-shadow: 1px 1px 0 #000; }
.active .chan svg { filter: drop-shadow(1px 1px 0 #000); }
.mix { flex: none; display: flex; gap: 1px; width: 439px; padding: 4px 11px 0 5px; background: var(--cell); align-items: flex-start; }
.mix .grip { margin-top: 6px; }
.vol { width: 130px; }
.bal { width: 87px; }
.fx { width: 184px; }
.grip { width: 8px; height: 12px; margin-left: auto; }
.lane { position: relative; flex: 1; min-width: 0; background: repeating-linear-gradient(to right, #000 0 1px, var(--cell) 1px 114px, #000 114px 115px, var(--dark) 115px 228px); }
.pattern {
  --a: color-mix(in srgb, var(--c) 33%, #1d1a1d);
  --b: color-mix(in srgb, var(--c) 33%, #161316);
  position: absolute; top: 0; height: 31px; overflow: hidden;
  background: repeating-linear-gradient(to right, var(--a) 0 113px, var(--b) 113px 227px, var(--a) 227px 228px);
}
.pattern.even { background: repeating-linear-gradient(to right, var(--b) 0 113px, var(--a) 113px 227px, var(--b) 227px 228px); }
.art { width: 100%; height: 31px; }
.area { fill: color-mix(in srgb, var(--c) 58%, #1d1a1d); }
.pname { position: absolute; left: 2px; top: 1px; font-size: 9px; line-height: 12px; font-weight: 700; text-shadow: 1px 1px 0 #000; }
.pattern.selected { z-index: 1; margin: -1px; height: 33px; padding: 1px; color: #fff; }
.pattern.selected::after { content: ""; position: absolute; inset: 0; border: 2px solid #fff; }
.pattern.selected .pname { left: 3px; top: 2px; }
.link { position: absolute; left: 108px; top: 10px; width: 12px; height: 12px; filter: drop-shadow(1px 1px 0 #000); }
.playhead { position: absolute; left: 598px; top: 1px; bottom: 0; width: 2px; background: #b4bfca; }
.playhead span { position: absolute; left: -7px; top: 0; width: 16px; height: 16px; border-radius: 50%; background: #b4bfca; }
.playhead span::after { content: ""; position: absolute; left: 6px; top: 4px; border: 4px solid transparent; border-left: 7px solid #0b0c10; border-right: 0; }
.loop { position: absolute; left: 1059px; top: 3px; width: 12px; height: 12px; }
.badges { position: absolute; left: 1055px; top: 214px; display: flex; gap: 4px; }
.badges i { display: grid; place-items: center; width: 18px; height: 18px; border-radius: 50%; background: #e1bee7; color: #15181f; }
.badges svg { width: 12px; height: 12px; }
.title { position: absolute; font-size: 16px; line-height: 22px; white-space: nowrap; text-shadow: 1px 1px 1px #000; }
.song-title { left: 619px; top: 453px; opacity: .5; }
.roll-title { left: 19px; top: 18px; }
.bar-v, .bar-h { position: absolute; background: rgba(176, 188, 200, .55); border-radius: 1px; }
.bar-v { width: 4px; right: 1px; }
.bar-h { height: 4px; }
.song-v { top: 19px; height: 376px; }
.song-h { left: 600px; bottom: 1px; width: 98px; }
.roll-v { top: 277px; height: 194px; }
.roll-h { left: 88px; bottom: 1px; width: 80px; }

.ctl { position: relative; display: block; height: 24px; border: 1px solid var(--c); border-radius: 4px; background: var(--well); color: var(--c); text-align: center; line-height: 21px; white-space: nowrap; }
.box { padding-bottom: 2px; line-height: 20px; }
.slider, .solid { --fill: color-mix(in srgb, var(--c) 15%, rgb(31, 34, 40)); }
.slider { background: linear-gradient(to right, var(--fill) var(--v), var(--well) 0); }
.solid { background: var(--fill); }
.slider input { position: absolute; inset: 0; width: 100%; height: 100%; opacity: 0; }
.lead-ic { position: absolute; left: 4px; top: 4px; }
.pick { display: flex; }
.pick button { flex: none; width: 23px; display: grid; place-items: center; }
.pick button:first-child { border-right: 1px solid var(--c); }
.pick button:last-child { border-left: 1px solid var(--c); }
.pick button svg { width: 8px; height: 12px; }
.pick select { flex: 1; min-width: 0; appearance: none; text-align: center; text-align-last: center; line-height: 20px; padding-bottom: 1px; }
.off { --c: #5c6169; color: #5c6169; }

.float { position: absolute; right: 9px; z-index: 2; background: var(--dark); border: 1px solid #4a4f5c; border-radius: 4px; overflow: hidden; }
.song-float { top: 28px; width: 201px; }
.roll-float { top: 45px; width: 261px; }
.fhead { display: flex; align-items: center; height: 25px; padding: 0 5px 1px 3px; background: #2f333c; }
.fhead:first-child { height: 24px; }
.fhead span { flex: 1; margin-left: 4px; }
.chev { width: 12px; height: 8px; }
.fbody { display: flex; flex-direction: column; gap: 1px; padding: 4px 3px; }
.song-float .fbody { padding-bottom: 2px; }
.toggle { display: flex; justify-content: flex-end; align-items: center; height: 24px; padding-right: 1px; }
.toggle span { margin-right: 6px; margin-bottom: 1px; }
.toggle input { appearance: none; display: flex; align-items: center; width: 47px; height: 24px; padding: 0 4px; border: 1px solid var(--c); border-radius: 5px; background: var(--well); }
.toggle input::before { content: ""; width: 14px; height: 14px; border-radius: 3px; background: var(--c); }
.toggle input:checked { justify-content: flex-end; background: #2f333c; }

.roll { position: relative; flex: 1; min-height: 0; display: flex; flex-direction: column; margin-top: 4px; border-top: 1px solid #000; overflow: hidden; }
.rhead { display: flex; flex: none; height: 36px; background: var(--dark); }
.corner { flex: none; width: 64px; border-right: 1px solid #000; }
.rtop { flex: 1; min-width: 0; overflow: hidden; }
.beats { display: flex; height: 18px; padding-left: 35px; border-bottom: 1px solid #000; font-size: 11px; line-height: 18px; }
.beats span { flex: none; width: 96px; padding-left: 4px; }
.beats .bar { border-left: 3px solid #000; padding-left: 1px; }
.strip { display: flex; height: 18px; border-bottom: 1px solid #000; font-size: 11px; line-height: 16px; color: #15181f; text-align: center; }
.strip span { flex: none; width: 768px; background: #e1bee7; border-left: 3px solid #000; }
.strip .lead { width: 35px; border: 0; }
.rbody { flex: 1; min-height: 0; display: flex; overflow: hidden; }
.keys { flex: none; width: 64px; padding-top: 5px; border-right: 1px solid #000; background: linear-gradient(to right, #a0abb5, #b4c0ca 60%); }
.key { position: relative; height: 12px; text-align: right; font-size: 11px; line-height: 13px; color: #21242d; }
.key span { padding-right: 3px; }
.key.edge { border-top: 1px solid #000; }
.key.black::before { content: ""; position: absolute; z-index: 1; left: 0; top: 0; width: 37px; height: 14px; border-radius: 0 4px 4px 0; background: var(--cell); }
.grid { position: relative; flex: 1; min-width: 0; padding-top: 5px; background: var(--dark); overflow: hidden; }
.glane { height: 12px; background: var(--cell); border-top: 1px solid #12141a; }
.glane.black { background: var(--dark); border-color: #0f1116; }
.glane.edge { border-color: #000; }
.lines { position: absolute; inset: 0; background: repeating-linear-gradient(to right, #000 0 1px, transparent 1px 96px) 36px 0, repeating-linear-gradient(to right, rgba(0, 0, 0, .25) 0 1px, transparent 1px 24px) 12px 0; background-repeat: no-repeat; }
.barlines { position: absolute; inset: 0 0 0 35px; background: repeating-linear-gradient(to right, #000 0 3px, transparent 3px 768px), repeating-linear-gradient(to right, #101217 0 3px, transparent 3px 384px); }
.note { position: absolute; height: 13px; border: 1px solid #0d0e13; background: linear-gradient(#ffecb3, #cbb77f); color: #15181f; font-size: 11px; line-height: 12px; padding-left: 1px; overflow: hidden; }

.side { flex: none; width: 482px; padding: 2px 9px 0 4px; border-left: 4px solid #0b0c10; background: var(--dark); overflow: hidden; }
.crumbs { display: flex; align-items: center; height: 24px; padding-left: 2px; }
.crumbs a { margin: 0 2px; }
.crumbs .arrow { margin: 0 6px 0 1px; opacity: .8; }
.ptitle { height: 26px; font-size: 12px; line-height: 26px; }
.panel { display: flex; flex-direction: column; margin-bottom: 1px; border: 1px solid #4a4f5c; border-radius: 4px; background: #2f333c; color: var(--c); }
.panel section { border-bottom: 1px solid #15181f; }
.shead { display: flex; align-items: center; height: 25px; padding: 0 5px 2px 3px; }
.shead.pad { margin-bottom: 4px; }
.shead span { flex: 1; margin-left: 5px; }
.shead .chev { margin-left: 9px; }
.tabs { display: flex; height: 26px; margin: 0 4px 3px 3px; border-bottom: 1px solid var(--c); }
.tabs button { flex-basis: 0; height: 26px; padding-top: 6px; border-bottom: 3px solid transparent; opacity: .65; }
.tabs .on { font-weight: 700; border-color: var(--c); opacity: 1; }
.items { display: flex; flex-direction: column; gap: 3px; padding: 0 3px 3px; }
.wave { height: 105px; }
.wave svg { width: 100%; height: 103px; overflow: hidden; }
.wave path { fill: none; stroke: var(--c); stroke-width: 2; vector-effect: non-scaling-stroke; }
.add { display: flex; align-items: center; justify-content: center; gap: 4px; height: 25px; }
</style>
